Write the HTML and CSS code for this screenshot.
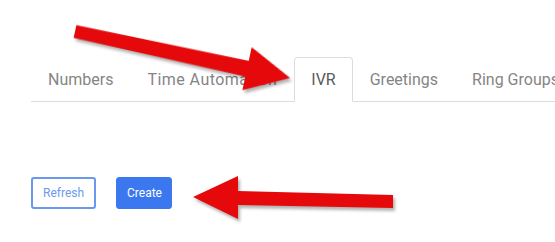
FILE: index.html
```html
<!DOCTYPE html>
<html>
<head>
<meta charset="utf-8">
<link rel="stylesheet" href="styles.css">
</head>
<body>
<div class="page">
  <ul class="tabs">
    <li class="tab">Numbers</li>
    <li class="tab tab-wide">Time Automation</li>
    <li class="tab active">IVR</li>
    <li class="tab">Greetings</li>
    <li class="tab">Ring Groups</li>
  </ul>
  <div class="actions">
    <button class="btn btn-outline">Refresh</button>
    <button class="btn btn-primary">Create</button>
  </div>
</div>
<svg class="overlay" width="555" height="242" viewBox="0 0 555 242">
  <g class="arrow">
    <polygon transform="translate(75 31.5) rotate(12.2)" points="0,-6.5 176,-8 176,-22 220,0 176,22 176,8 0,6.5"/>
    <polygon points="193,197 238,176 238,191 393,195 393,208 238,205 238,219"/>
  </g>
</svg>
</body>
</html>
```
FILE: styles.css
```css
html, body {
  margin: 0;
  padding: 0;
  background: #ffffff;
  overflow: hidden;
  width: 555px;
  height: 242px;
}
body {
  font-family: Roboto, "Liberation Sans", sans-serif;
  position: relative;
}
.page {
  padding: 57px 0 0 31px;
}
.tabs {
  list-style: none;
  margin: 0;
  padding: 0;
  display: flex;
  flex-wrap: nowrap;
  border-bottom: 1px solid #dcdcdc;
  white-space: nowrap;
}
.tab {
  flex: none;
  font-size: 16px;
  line-height: 24px;
  color: #858585;
  padding: 10px 16px 9px;
  border: 1px solid transparent;
  border-top-left-radius: 4px;
  border-top-right-radius: 4px;
  margin-bottom: -1px;
}
.tab-wide {
  letter-spacing: 0.45px;
}
.tab.active {
  color: #5a5a5a;
  background: #ffffff;
  border-color: #dcdcdc #dcdcdc #ffffff;
}
.actions {
  display: flex;
  gap: 20px;
  margin-top: 75px;
}
.btn {
  font-family: Roboto, "Liberation Sans", sans-serif;
  font-size: 12px;
  height: 32px;
  border-radius: 3px;
  padding: 0 10px;
  cursor: pointer;
}
.btn-outline {
  background: #ffffff;
  color: #6c99ee;
  border: 2px solid #6a98f0;
  width: 65px;
}
.btn-primary {
  background: #3b78f0;
  color: #ffffff;
  border: 1px solid #3b78f0;
  width: 56px;
}
.overlay {
  position: absolute;
  left: 0;
  top: 0;
  pointer-events: none;
}
.arrow {
  fill: #e6090b;
  filter: drop-shadow(2px 3px 1.5px rgba(0, 0, 0, 0.3));
}
```
